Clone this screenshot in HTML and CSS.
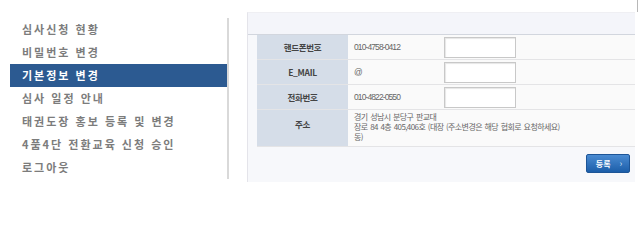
FILE: index.html
```html
<!DOCTYPE html>
<html lang="ko">
<head>
<meta charset="utf-8">
<link rel="stylesheet" href="styles.css">
</head>
<body>
<div class="page">
  <ul class="menu">
    <li>심사신청 현황</li>
    <li>비밀번호 변경</li>
    <li class="active">기본정보 변경</li>
    <li>심사 일정 안내</li>
    <li>태권도장 홍보 등록 및 변경</li>
    <li>4품4단 전환교육 신청 승인</li>
    <li>로그아웃</li>
  </ul>
  <div class="right">
    <div class="strip"><div class="edge"></div></div>
    <div class="panel">
      <div class="panel-head"></div>
      <div class="table">
        <div class="label">핸드폰번호</div>
        <div class="value num">010-4758-0412</div>
        <div class="inp"><span class="box"></span></div>
        <div class="label">E_MAIL</div>
        <div class="value num">@</div>
        <div class="inp"><span class="box"></span></div>
        <div class="label">전화번호</div>
        <div class="value num">010-4822-0550</div>
        <div class="inp"><span class="box"></span></div>
        <div class="label tall">주소</div>
        <div class="value wide"><span class="addr">경기 성남시 분당구 판교대<br>장로 84 4층 405,406호 (대장<br>동)</span><span class="note">(주소변경은 해당 협회로 요청하세요)</span></div>
      </div>
      <div class="foot"><button class="btn">등록<span class="arr">›</span></button></div>
    </div>
  </div>
</div>
</body>
</html>
```
FILE: styles.css
```css
html, body { margin: 0; padding: 0; background: #fff; }
body { font-family: "Noto Sans CJK KR", "Noto Sans", sans-serif; }
.page { display: flex; align-items: flex-start; }
.menu {
  list-style: none; margin: 18px 0 0 10px; padding: 0;
  width: 217px; border-right: 2px solid #d9d9d9;
}
.menu li {
  height: 23px; line-height: 23px; padding-left: 12px;
  font-size: 11px; font-weight: bold; color: #7c7c7c; letter-spacing: 2px;
  white-space: nowrap;
}
.menu li.active { background: #2c5a91; color: #fff; }
.right { width: 392px; margin-left: 18px; }
.strip { height: 12px; display: flex; justify-content: flex-end; }
.edge { width: 1px; height: 12px; background: #b8b8b8; margin-right: 1px; }
.panel {
  box-sizing: border-box; width: 388px; height: 170px;
  border-left: 1px solid #e4e4ea; border-top: 1px solid #efeff3;
  background: #f7f8fb;
}
.panel-head { height: 21px; background: #f4f5fa; border-bottom: 1px solid #d2d6de; }
.table { margin-left: 9px; display: grid; grid-template-columns: 91px 96px 1fr; }
.table > div { box-sizing: border-box; height: 25px; border-bottom: 1px solid #e4e4e6; }
.label {
  background: #d5dde8; font-size: 8.5px; font-weight: bold; color: #444;
  display: flex; align-items: center; justify-content: center; letter-spacing: -0.3px;
}
.value { background: #fafafa; font-size: 8px; color: #666; display: flex; align-items: center; padding-left: 6px; letter-spacing: -0.6px; word-spacing: 1px; }
.num { font-family: "Liberation Sans", sans-serif; font-size: 8.5px; letter-spacing: -0.9px; word-spacing: 0; color: #666; }
.inp { background: #fafafa; display: flex; align-items: center; }
.box {
  display: block; width: 72px; height: 21px; box-sizing: border-box;
  background: #fff; border: 1px solid #c8c8c8; box-shadow: inset 1px 1px 1px #e6e6e6;
}
.table > .tall { height: 37px; padding-bottom: 9px; }
.table > .wide { height: 37px; grid-column: span 2; display: block; padding-top: 2px; line-height: 10px; white-space: nowrap; }
.addr { display: inline-block; width: 86px; vertical-align: middle; }
.note { vertical-align: middle; margin-left: 6px; }
.foot { display: flex; justify-content: flex-end; padding: 7px 5px 0 0; }
.btn {
  width: 44px; height: 19px; padding: 0 0 0 2px; border: 1px solid #1d5597; border-radius: 2px;
  background: linear-gradient(#4a8bd2, #1c5ea9); color: #fff;
  font-family: "Noto Sans CJK KR", sans-serif; font-size: 8px; font-weight: bold;
  display: flex; align-items: center; justify-content: center; gap: 9px; line-height: 1;
}
.arr { font-weight: normal; font-size: 9px; color: #cfe0f5; }
```
